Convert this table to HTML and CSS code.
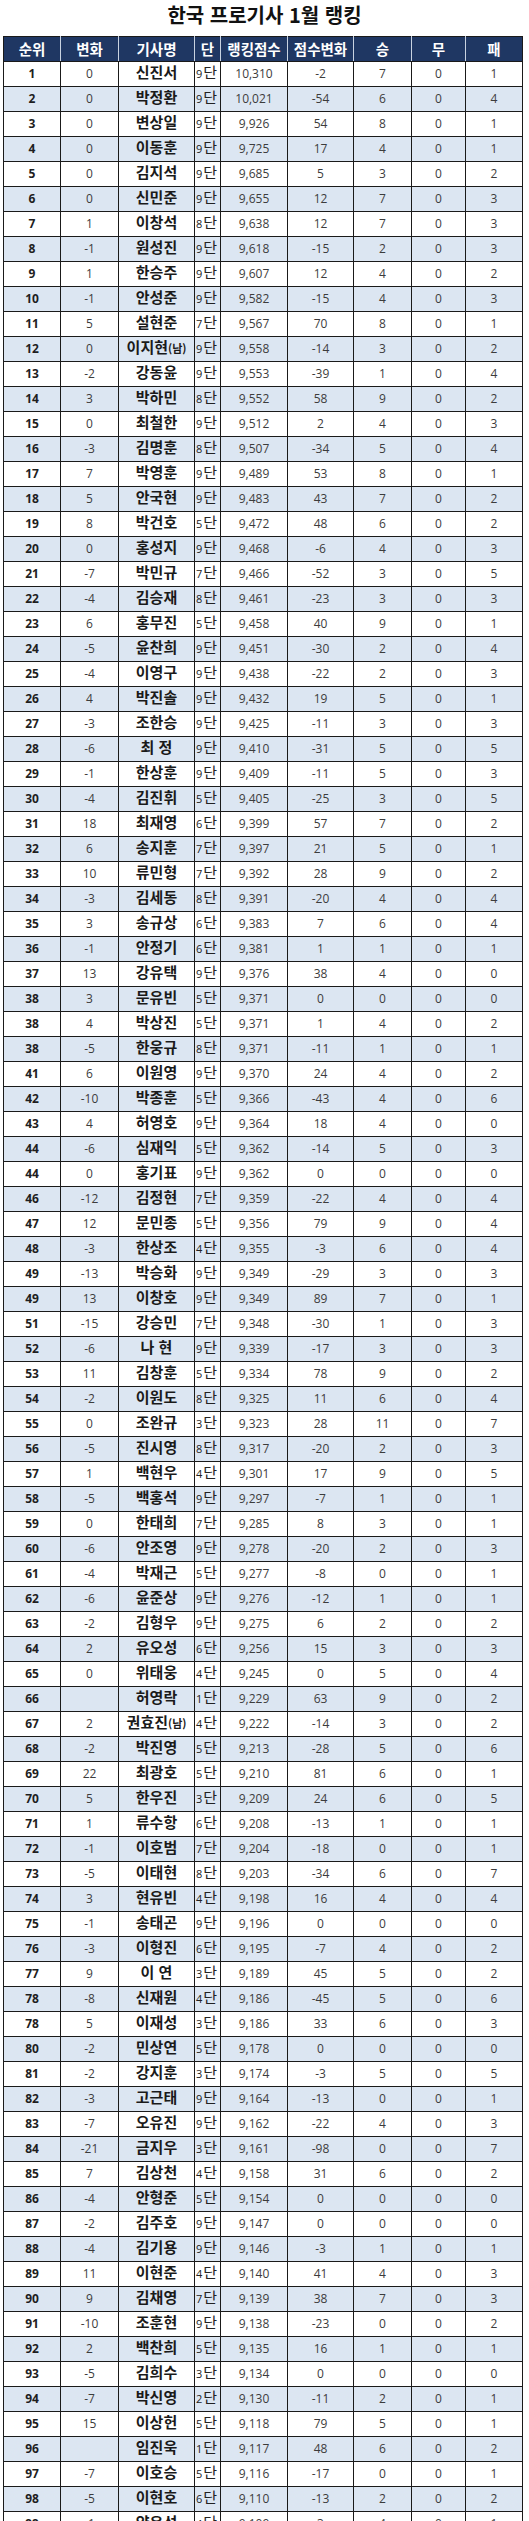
FILE: index.html
```html
<!DOCTYPE html>
<html lang="ko">
<head>
<meta charset="utf-8">
<title>한국 프로기사 1월 랭킹</title>
<link rel="stylesheet" href="styles.css">
</head>
<body>
<div class="title">한국 프로기사 1월 랭킹</div>
<table class="rank">
<colgroup><col class="c1"><col class="c2"><col class="c3"><col class="c4"><col class="c5"><col class="c6"><col class="c7"><col class="c8"><col class="c9"></colgroup>
<thead><tr><th>순위</th><th>변화</th><th>기사명</th><th>단</th><th>랭킹점수</th><th>점수변화</th><th>승</th><th>무</th><th>패</th></tr></thead>
<tbody>
<tr><td class="rk">1</td><td>0</td><td class="nm">신진서</td><td class="dan"><span class="dn">9</span>단</td><td>10,310</td><td>-2</td><td>7</td><td>0</td><td>1</td></tr>
<tr><td class="rk">2</td><td>0</td><td class="nm">박정환</td><td class="dan"><span class="dn">9</span>단</td><td>10,021</td><td>-54</td><td>6</td><td>0</td><td>4</td></tr>
<tr><td class="rk">3</td><td>0</td><td class="nm">변상일</td><td class="dan"><span class="dn">9</span>단</td><td>9,926</td><td>54</td><td>8</td><td>0</td><td>1</td></tr>
<tr><td class="rk">4</td><td>0</td><td class="nm">이동훈</td><td class="dan"><span class="dn">9</span>단</td><td>9,725</td><td>17</td><td>4</td><td>0</td><td>1</td></tr>
<tr><td class="rk">5</td><td>0</td><td class="nm">김지석</td><td class="dan"><span class="dn">9</span>단</td><td>9,685</td><td>5</td><td>3</td><td>0</td><td>2</td></tr>
<tr><td class="rk">6</td><td>0</td><td class="nm">신민준</td><td class="dan"><span class="dn">9</span>단</td><td>9,655</td><td>12</td><td>7</td><td>0</td><td>3</td></tr>
<tr><td class="rk">7</td><td>1</td><td class="nm">이창석</td><td class="dan"><span class="dn">8</span>단</td><td>9,638</td><td>12</td><td>7</td><td>0</td><td>3</td></tr>
<tr><td class="rk">8</td><td>-1</td><td class="nm">원성진</td><td class="dan"><span class="dn">9</span>단</td><td>9,618</td><td>-15</td><td>2</td><td>0</td><td>3</td></tr>
<tr><td class="rk">9</td><td>1</td><td class="nm">한승주</td><td class="dan"><span class="dn">9</span>단</td><td>9,607</td><td>12</td><td>4</td><td>0</td><td>2</td></tr>
<tr><td class="rk">10</td><td>-1</td><td class="nm">안성준</td><td class="dan"><span class="dn">9</span>단</td><td>9,582</td><td>-15</td><td>4</td><td>0</td><td>3</td></tr>
<tr><td class="rk">11</td><td>5</td><td class="nm">설현준</td><td class="dan"><span class="dn">7</span>단</td><td>9,567</td><td>70</td><td>8</td><td>0</td><td>1</td></tr>
<tr><td class="rk">12</td><td>0</td><td class="nm">이지현<span class="sx">(남)</span></td><td class="dan"><span class="dn">9</span>단</td><td>9,558</td><td>-14</td><td>3</td><td>0</td><td>2</td></tr>
<tr><td class="rk">13</td><td>-2</td><td class="nm">강동윤</td><td class="dan"><span class="dn">9</span>단</td><td>9,553</td><td>-39</td><td>1</td><td>0</td><td>4</td></tr>
<tr><td class="rk">14</td><td>3</td><td class="nm">박하민</td><td class="dan"><span class="dn">8</span>단</td><td>9,552</td><td>58</td><td>9</td><td>0</td><td>2</td></tr>
<tr><td class="rk">15</td><td>0</td><td class="nm">최철한</td><td class="dan"><span class="dn">9</span>단</td><td>9,512</td><td>2</td><td>4</td><td>0</td><td>3</td></tr>
<tr><td class="rk">16</td><td>-3</td><td class="nm">김명훈</td><td class="dan"><span class="dn">8</span>단</td><td>9,507</td><td>-34</td><td>5</td><td>0</td><td>4</td></tr>
<tr><td class="rk">17</td><td>7</td><td class="nm">박영훈</td><td class="dan"><span class="dn">9</span>단</td><td>9,489</td><td>53</td><td>8</td><td>0</td><td>1</td></tr>
<tr><td class="rk">18</td><td>5</td><td class="nm">안국현</td><td class="dan"><span class="dn">9</span>단</td><td>9,483</td><td>43</td><td>7</td><td>0</td><td>2</td></tr>
<tr><td class="rk">19</td><td>8</td><td class="nm">박건호</td><td class="dan"><span class="dn">5</span>단</td><td>9,472</td><td>48</td><td>6</td><td>0</td><td>2</td></tr>
<tr><td class="rk">20</td><td>0</td><td class="nm">홍성지</td><td class="dan"><span class="dn">9</span>단</td><td>9,468</td><td>-6</td><td>4</td><td>0</td><td>3</td></tr>
<tr><td class="rk">21</td><td>-7</td><td class="nm">박민규</td><td class="dan"><span class="dn">7</span>단</td><td>9,466</td><td>-52</td><td>3</td><td>0</td><td>5</td></tr>
<tr><td class="rk">22</td><td>-4</td><td class="nm">김승재</td><td class="dan"><span class="dn">8</span>단</td><td>9,461</td><td>-23</td><td>3</td><td>0</td><td>3</td></tr>
<tr><td class="rk">23</td><td>6</td><td class="nm">홍무진</td><td class="dan"><span class="dn">5</span>단</td><td>9,458</td><td>40</td><td>9</td><td>0</td><td>1</td></tr>
<tr><td class="rk">24</td><td>-5</td><td class="nm">윤찬희</td><td class="dan"><span class="dn">9</span>단</td><td>9,451</td><td>-30</td><td>2</td><td>0</td><td>4</td></tr>
<tr><td class="rk">25</td><td>-4</td><td class="nm">이영구</td><td class="dan"><span class="dn">9</span>단</td><td>9,438</td><td>-22</td><td>2</td><td>0</td><td>3</td></tr>
<tr><td class="rk">26</td><td>4</td><td class="nm">박진솔</td><td class="dan"><span class="dn">9</span>단</td><td>9,432</td><td>19</td><td>5</td><td>0</td><td>1</td></tr>
<tr><td class="rk">27</td><td>-3</td><td class="nm">조한승</td><td class="dan"><span class="dn">9</span>단</td><td>9,425</td><td>-11</td><td>3</td><td>0</td><td>3</td></tr>
<tr><td class="rk">28</td><td>-6</td><td class="nm">최 정</td><td class="dan"><span class="dn">9</span>단</td><td>9,410</td><td>-31</td><td>5</td><td>0</td><td>5</td></tr>
<tr><td class="rk">29</td><td>-1</td><td class="nm">한상훈</td><td class="dan"><span class="dn">9</span>단</td><td>9,409</td><td>-11</td><td>5</td><td>0</td><td>3</td></tr>
<tr><td class="rk">30</td><td>-4</td><td class="nm">김진휘</td><td class="dan"><span class="dn">5</span>단</td><td>9,405</td><td>-25</td><td>3</td><td>0</td><td>5</td></tr>
<tr><td class="rk">31</td><td>18</td><td class="nm">최재영</td><td class="dan"><span class="dn">6</span>단</td><td>9,399</td><td>57</td><td>7</td><td>0</td><td>2</td></tr>
<tr><td class="rk">32</td><td>6</td><td class="nm">송지훈</td><td class="dan"><span class="dn">7</span>단</td><td>9,397</td><td>21</td><td>5</td><td>0</td><td>1</td></tr>
<tr><td class="rk">33</td><td>10</td><td class="nm">류민형</td><td class="dan"><span class="dn">7</span>단</td><td>9,392</td><td>28</td><td>9</td><td>0</td><td>2</td></tr>
<tr><td class="rk">34</td><td>-3</td><td class="nm">김세동</td><td class="dan"><span class="dn">8</span>단</td><td>9,391</td><td>-20</td><td>4</td><td>0</td><td>4</td></tr>
<tr><td class="rk">35</td><td>3</td><td class="nm">송규상</td><td class="dan"><span class="dn">6</span>단</td><td>9,383</td><td>7</td><td>6</td><td>0</td><td>4</td></tr>
<tr><td class="rk">36</td><td>-1</td><td class="nm">안정기</td><td class="dan"><span class="dn">6</span>단</td><td>9,381</td><td>1</td><td>1</td><td>0</td><td>1</td></tr>
<tr><td class="rk">37</td><td>13</td><td class="nm">강유택</td><td class="dan"><span class="dn">9</span>단</td><td>9,376</td><td>38</td><td>4</td><td>0</td><td>0</td></tr>
<tr><td class="rk">38</td><td>3</td><td class="nm">문유빈</td><td class="dan"><span class="dn">5</span>단</td><td>9,371</td><td>0</td><td>0</td><td>0</td><td>0</td></tr>
<tr><td class="rk">38</td><td>4</td><td class="nm">박상진</td><td class="dan"><span class="dn">5</span>단</td><td>9,371</td><td>1</td><td>4</td><td>0</td><td>2</td></tr>
<tr><td class="rk">38</td><td>-5</td><td class="nm">한웅규</td><td class="dan"><span class="dn">8</span>단</td><td>9,371</td><td>-11</td><td>1</td><td>0</td><td>1</td></tr>
<tr><td class="rk">41</td><td>6</td><td class="nm">이원영</td><td class="dan"><span class="dn">9</span>단</td><td>9,370</td><td>24</td><td>4</td><td>0</td><td>2</td></tr>
<tr><td class="rk">42</td><td>-10</td><td class="nm">박종훈</td><td class="dan"><span class="dn">5</span>단</td><td>9,366</td><td>-43</td><td>4</td><td>0</td><td>6</td></tr>
<tr><td class="rk">43</td><td>4</td><td class="nm">허영호</td><td class="dan"><span class="dn">9</span>단</td><td>9,364</td><td>18</td><td>4</td><td>0</td><td>0</td></tr>
<tr><td class="rk">44</td><td>-6</td><td class="nm">심재익</td><td class="dan"><span class="dn">5</span>단</td><td>9,362</td><td>-14</td><td>5</td><td>0</td><td>3</td></tr>
<tr><td class="rk">44</td><td>0</td><td class="nm">홍기표</td><td class="dan"><span class="dn">9</span>단</td><td>9,362</td><td>0</td><td>0</td><td>0</td><td>0</td></tr>
<tr><td class="rk">46</td><td>-12</td><td class="nm">김정현</td><td class="dan"><span class="dn">7</span>단</td><td>9,359</td><td>-22</td><td>4</td><td>0</td><td>4</td></tr>
<tr><td class="rk">47</td><td>12</td><td class="nm">문민종</td><td class="dan"><span class="dn">5</span>단</td><td>9,356</td><td>79</td><td>9</td><td>0</td><td>4</td></tr>
<tr><td class="rk">48</td><td>-3</td><td class="nm">한상조</td><td class="dan"><span class="dn">4</span>단</td><td>9,355</td><td>-3</td><td>6</td><td>0</td><td>4</td></tr>
<tr><td class="rk">49</td><td>-13</td><td class="nm">박승화</td><td class="dan"><span class="dn">9</span>단</td><td>9,349</td><td>-29</td><td>3</td><td>0</td><td>3</td></tr>
<tr><td class="rk">49</td><td>13</td><td class="nm">이창호</td><td class="dan"><span class="dn">9</span>단</td><td>9,349</td><td>89</td><td>7</td><td>0</td><td>1</td></tr>
<tr><td class="rk">51</td><td>-15</td><td class="nm">강승민</td><td class="dan"><span class="dn">7</span>단</td><td>9,348</td><td>-30</td><td>1</td><td>0</td><td>3</td></tr>
<tr><td class="rk">52</td><td>-6</td><td class="nm">나 현</td><td class="dan"><span class="dn">9</span>단</td><td>9,339</td><td>-17</td><td>3</td><td>0</td><td>3</td></tr>
<tr><td class="rk">53</td><td>11</td><td class="nm">김창훈</td><td class="dan"><span class="dn">5</span>단</td><td>9,334</td><td>78</td><td>9</td><td>0</td><td>2</td></tr>
<tr><td class="rk">54</td><td>-2</td><td class="nm">이원도</td><td class="dan"><span class="dn">8</span>단</td><td>9,325</td><td>11</td><td>6</td><td>0</td><td>4</td></tr>
<tr><td class="rk">55</td><td>0</td><td class="nm">조완규</td><td class="dan"><span class="dn">3</span>단</td><td>9,323</td><td>28</td><td>11</td><td>0</td><td>7</td></tr>
<tr><td class="rk">56</td><td>-5</td><td class="nm">진시영</td><td class="dan"><span class="dn">8</span>단</td><td>9,317</td><td>-20</td><td>2</td><td>0</td><td>3</td></tr>
<tr><td class="rk">57</td><td>1</td><td class="nm">백현우</td><td class="dan"><span class="dn">4</span>단</td><td>9,301</td><td>17</td><td>9</td><td>0</td><td>5</td></tr>
<tr><td class="rk">58</td><td>-5</td><td class="nm">백홍석</td><td class="dan"><span class="dn">9</span>단</td><td>9,297</td><td>-7</td><td>1</td><td>0</td><td>1</td></tr>
<tr><td class="rk">59</td><td>0</td><td class="nm">한태희</td><td class="dan"><span class="dn">7</span>단</td><td>9,285</td><td>8</td><td>3</td><td>0</td><td>1</td></tr>
<tr><td class="rk">60</td><td>-6</td><td class="nm">안조영</td><td class="dan"><span class="dn">9</span>단</td><td>9,278</td><td>-20</td><td>2</td><td>0</td><td>3</td></tr>
<tr><td class="rk">61</td><td>-4</td><td class="nm">박재근</td><td class="dan"><span class="dn">5</span>단</td><td>9,277</td><td>-8</td><td>0</td><td>0</td><td>1</td></tr>
<tr><td class="rk">62</td><td>-6</td><td class="nm">윤준상</td><td class="dan"><span class="dn">9</span>단</td><td>9,276</td><td>-12</td><td>1</td><td>0</td><td>1</td></tr>
<tr><td class="rk">63</td><td>-2</td><td class="nm">김형우</td><td class="dan"><span class="dn">9</span>단</td><td>9,275</td><td>6</td><td>2</td><td>0</td><td>2</td></tr>
<tr><td class="rk">64</td><td>2</td><td class="nm">유오성</td><td class="dan"><span class="dn">6</span>단</td><td>9,256</td><td>15</td><td>3</td><td>0</td><td>3</td></tr>
<tr><td class="rk">65</td><td>0</td><td class="nm">위태웅</td><td class="dan"><span class="dn">4</span>단</td><td>9,245</td><td>0</td><td>5</td><td>0</td><td>4</td></tr>
<tr><td class="rk">66</td><td></td><td class="nm">허영락</td><td class="dan"><span class="dn">1</span>단</td><td>9,229</td><td>63</td><td>9</td><td>0</td><td>2</td></tr>
<tr><td class="rk">67</td><td>2</td><td class="nm">권효진<span class="sx">(남)</span></td><td class="dan"><span class="dn">4</span>단</td><td>9,222</td><td>-14</td><td>3</td><td>0</td><td>2</td></tr>
<tr><td class="rk">68</td><td>-2</td><td class="nm">박진영</td><td class="dan"><span class="dn">5</span>단</td><td>9,213</td><td>-28</td><td>5</td><td>0</td><td>6</td></tr>
<tr><td class="rk">69</td><td>22</td><td class="nm">최광호</td><td class="dan"><span class="dn">5</span>단</td><td>9,210</td><td>81</td><td>6</td><td>0</td><td>1</td></tr>
<tr><td class="rk">70</td><td>5</td><td class="nm">한우진</td><td class="dan"><span class="dn">3</span>단</td><td>9,209</td><td>24</td><td>6</td><td>0</td><td>5</td></tr>
<tr><td class="rk">71</td><td>1</td><td class="nm">류수항</td><td class="dan"><span class="dn">6</span>단</td><td>9,208</td><td>-13</td><td>1</td><td>0</td><td>1</td></tr>
<tr><td class="rk">72</td><td>-1</td><td class="nm">이호범</td><td class="dan"><span class="dn">7</span>단</td><td>9,204</td><td>-18</td><td>0</td><td>0</td><td>1</td></tr>
<tr><td class="rk">73</td><td>-5</td><td class="nm">이태현</td><td class="dan"><span class="dn">8</span>단</td><td>9,203</td><td>-34</td><td>6</td><td>0</td><td>7</td></tr>
<tr><td class="rk">74</td><td>3</td><td class="nm">현유빈</td><td class="dan"><span class="dn">4</span>단</td><td>9,198</td><td>16</td><td>4</td><td>0</td><td>4</td></tr>
<tr><td class="rk">75</td><td>-1</td><td class="nm">송태곤</td><td class="dan"><span class="dn">9</span>단</td><td>9,196</td><td>0</td><td>0</td><td>0</td><td>0</td></tr>
<tr><td class="rk">76</td><td>-3</td><td class="nm">이형진</td><td class="dan"><span class="dn">6</span>단</td><td>9,195</td><td>-7</td><td>4</td><td>0</td><td>2</td></tr>
<tr><td class="rk">77</td><td>9</td><td class="nm">이 연</td><td class="dan"><span class="dn">3</span>단</td><td>9,189</td><td>45</td><td>5</td><td>0</td><td>2</td></tr>
<tr><td class="rk">78</td><td>-8</td><td class="nm">신재원</td><td class="dan"><span class="dn">4</span>단</td><td>9,186</td><td>-45</td><td>5</td><td>0</td><td>6</td></tr>
<tr><td class="rk">78</td><td>5</td><td class="nm">이재성</td><td class="dan"><span class="dn">3</span>단</td><td>9,186</td><td>33</td><td>6</td><td>0</td><td>3</td></tr>
<tr><td class="rk">80</td><td>-2</td><td class="nm">민상연</td><td class="dan"><span class="dn">5</span>단</td><td>9,178</td><td>0</td><td>0</td><td>0</td><td>0</td></tr>
<tr><td class="rk">81</td><td>-2</td><td class="nm">강지훈</td><td class="dan"><span class="dn">3</span>단</td><td>9,174</td><td>-3</td><td>5</td><td>0</td><td>5</td></tr>
<tr><td class="rk">82</td><td>-3</td><td class="nm">고근태</td><td class="dan"><span class="dn">9</span>단</td><td>9,164</td><td>-13</td><td>0</td><td>0</td><td>1</td></tr>
<tr><td class="rk">83</td><td>-7</td><td class="nm">오유진</td><td class="dan"><span class="dn">9</span>단</td><td>9,162</td><td>-22</td><td>4</td><td>0</td><td>3</td></tr>
<tr><td class="rk">84</td><td>-21</td><td class="nm">금지우</td><td class="dan"><span class="dn">3</span>단</td><td>9,161</td><td>-98</td><td>0</td><td>0</td><td>7</td></tr>
<tr><td class="rk">85</td><td>7</td><td class="nm">김상천</td><td class="dan"><span class="dn">4</span>단</td><td>9,158</td><td>31</td><td>6</td><td>0</td><td>2</td></tr>
<tr><td class="rk">86</td><td>-4</td><td class="nm">안형준</td><td class="dan"><span class="dn">5</span>단</td><td>9,154</td><td>0</td><td>0</td><td>0</td><td>0</td></tr>
<tr><td class="rk">87</td><td>-2</td><td class="nm">김주호</td><td class="dan"><span class="dn">9</span>단</td><td>9,147</td><td>0</td><td>0</td><td>0</td><td>0</td></tr>
<tr><td class="rk">88</td><td>-4</td><td class="nm">김기용</td><td class="dan"><span class="dn">9</span>단</td><td>9,146</td><td>-3</td><td>1</td><td>0</td><td>1</td></tr>
<tr><td class="rk">89</td><td>11</td><td class="nm">이현준</td><td class="dan"><span class="dn">4</span>단</td><td>9,140</td><td>41</td><td>4</td><td>0</td><td>3</td></tr>
<tr><td class="rk">90</td><td>9</td><td class="nm">김채영</td><td class="dan"><span class="dn">7</span>단</td><td>9,139</td><td>38</td><td>7</td><td>0</td><td>3</td></tr>
<tr><td class="rk">91</td><td>-10</td><td class="nm">조훈현</td><td class="dan"><span class="dn">9</span>단</td><td>9,138</td><td>-23</td><td>0</td><td>0</td><td>2</td></tr>
<tr><td class="rk">92</td><td>2</td><td class="nm">백찬희</td><td class="dan"><span class="dn">5</span>단</td><td>9,135</td><td>16</td><td>1</td><td>0</td><td>1</td></tr>
<tr><td class="rk">93</td><td>-5</td><td class="nm">김희수</td><td class="dan"><span class="dn">3</span>단</td><td>9,134</td><td>0</td><td>0</td><td>0</td><td>0</td></tr>
<tr><td class="rk">94</td><td>-7</td><td class="nm">박신영</td><td class="dan"><span class="dn">2</span>단</td><td>9,130</td><td>-11</td><td>2</td><td>0</td><td>1</td></tr>
<tr><td class="rk">95</td><td>15</td><td class="nm">이상헌</td><td class="dan"><span class="dn">5</span>단</td><td>9,118</td><td>79</td><td>5</td><td>0</td><td>1</td></tr>
<tr><td class="rk">96</td><td></td><td class="nm">임진욱</td><td class="dan"><span class="dn">1</span>단</td><td>9,117</td><td>48</td><td>6</td><td>0</td><td>2</td></tr>
<tr><td class="rk">97</td><td>-7</td><td class="nm">이호승</td><td class="dan"><span class="dn">5</span>단</td><td>9,116</td><td>-17</td><td>0</td><td>0</td><td>1</td></tr>
<tr><td class="rk">98</td><td>-5</td><td class="nm">이현호</td><td class="dan"><span class="dn">6</span>단</td><td>9,110</td><td>-13</td><td>2</td><td>0</td><td>2</td></tr>
<tr><td class="rk">99</td><td>-1</td><td class="nm">양유석</td><td class="dan"><span class="dn">4</span>단</td><td>9,109</td><td>3</td><td>4</td><td>0</td><td>1</td></tr>
</tbody>
</table>
</body>
</html>
```
FILE: styles.css
```css
html, body {
  margin: 0;
  padding: 0;
  background: #ffffff;
}
body {
  font-family: "Noto Sans CJK KR", sans-serif;
  color: #333;
}
.title {
  height: 36px;
  line-height: 30px;
  text-align: center;
  font-size: 20px;
  font-weight: 700;
  color: #111;
}
.rank {
  margin-left: 3px;
  width: 519px;
  border-collapse: collapse;
  table-layout: fixed;
}
.c1 { width: 57px; }
.c2 { width: 58px; }
.c3 { width: 76px; }
.c4 { width: 26px; }
.c5 { width: 67px; }
.c6 { width: 66px; }
.c7 { width: 58px; }
.c8 { width: 54px; }
.c9 { width: 57px; }
.rank th {
  background: #1f3763;
  color: #ffffff;
  font-size: 14.5px;
  font-weight: 700;
  height: 24px;
  padding: 0;
  border: 1px solid #1a1a1a;
  border-left-color: #c8d2e0;
  border-right-color: #c8d2e0;
  line-height: 20px;
  white-space: nowrap;
  overflow: hidden;
}
.rank th:first-child { border-left-color: #1a1a1a; }
.rank th:last-child { border-right-color: #1a1a1a; }
.rank td {
  height: 24px;
  padding: 0;
  border: 1px solid #1a1a1a;
  text-align: center;
  vertical-align: middle;
  font-family: "Open Sans", "Noto Sans CJK KR", sans-serif;
  font-size: 12px;
  color: #3c3c3c;
  line-height: 16px;
  white-space: nowrap;
  overflow: hidden;
}
.rank tbody tr:nth-child(even) td {
  background: #dce6f2;
}
.rank td.rk {
  font-weight: 700;
  color: #1e1e1e;
}
.rank td.nm {
  font-family: "Noto Sans CJK KR", sans-serif;
  font-size: 15px;
  font-weight: 700;
  color: #1a1a1a;
  height: 20px;
  padding-bottom: 4px;
  line-height: 18px;
}
.sx {
  font-size: 11px;
  font-weight: 700;
}
.rank td.dan {
  text-align: left;
  font-family: "Noto Sans CJK KR", sans-serif;
  font-size: 15px;
  font-weight: 400;
  color: #222;
  height: 22px;
  padding-left: 1px;
  padding-bottom: 2px;
  line-height: 18px;
  letter-spacing: -1px;
}
.dn {
  font-family: "Open Sans", sans-serif;
  font-size: 11px;
  letter-spacing: 0;
  margin-right: 1px;
}
```
